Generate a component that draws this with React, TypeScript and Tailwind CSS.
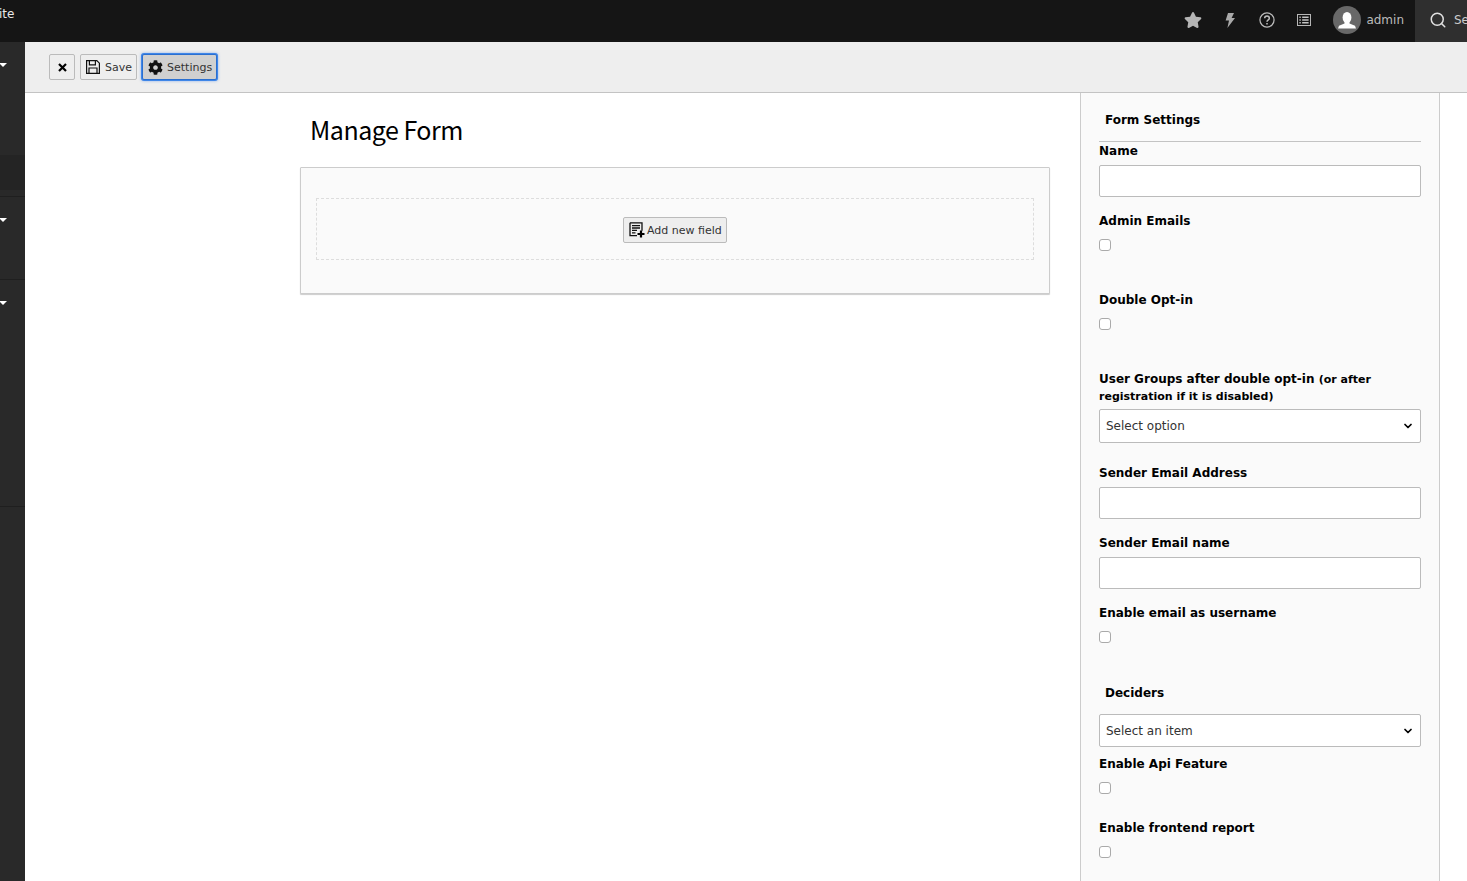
import React from "react";
import { ChevronDown, Search } from "lucide-react";
import { FaCog, FaStar } from "react-icons/fa";

const font = "font-['DejaVu_Sans','Liberation_Sans',sans-serif]";

const SideGroup = ({ h, border = true }: { h: string; border?: boolean }) => (
  <div className={`${h} pt-[21px] ${border ? "border-b border-[#1f1f1f]" : ""}`}>
    <div className="-ml-[1px] h-0 w-0 border-x-[4px] border-t-[4px] border-x-transparent border-t-white" />
  </div>
);

const Label = ({ children, className = "" }: { children: React.ReactNode; className?: string }) => (
  <label className={`block text-[12px] leading-[16px] font-bold text-black ${className}`}>{children}</label>
);

const TextInput = ({ className = "" }: { className?: string }) => (
  <input type="text" className={`block h-[32px] w-[322px] rounded-[2px] border border-[#bbbbbb] bg-white ${className}`} />
);

const Check = ({ className = "" }: { className?: string }) => (
  <input type="checkbox" className={`block h-[12px] w-[12px] appearance-none rounded-[3px] border border-[#aaaaaa] bg-white ${className}`} />
);

const Select = ({ text, className = "" }: { text: string; className?: string }) => (
  <div className={`relative w-[322px] ${className}`}>
    <select className="block h-full w-full appearance-none rounded-[2px] border border-[#bbbbbb] bg-white pl-[6px] text-[12px] text-[#333333] outline-none">
      <option>{text}</option>
    </select>
    <ChevronDown size={12} strokeWidth={3.5} className="absolute right-[7px] top-[11px] text-black" />
  </div>
);

const SaveIcon = () => (
  <svg width="16" height="16" viewBox="0 0 16 16" fill="none" stroke="#111" strokeWidth="1.2">
    <path d="M1.6 1.6h10.2l2.6 2.6v10.2H1.6z" />
    <path d="M4.4 1.6v4.2h6V1.6M4 14.4V9h8v5.4" />
  </svg>
);

const AddFieldIcon = () => (
  <svg width="16" height="16" viewBox="0 0 16 16" fill="none">
    <path d="M1 .8h12v8M8 13.6H1V.8" stroke="#111" strokeWidth="1.3" />
    <path d="M3 3.6h8M3 6h8M3 8.4h5M3 10.8h3.5" stroke="#111" strokeWidth="1.3" />
    <path d="M12 8.5v7M8.5 12h7" stroke="#000" strokeWidth="2.2" />
  </svg>
);

const TopIcons = () => (
  <div className="flex items-center">
    <FaStar size={18} className="text-[#b4b4b4]" />
    <svg width="10" height="15" viewBox="0 0 10 15" className="ml-[23px]" fill="#a9a9a9">
      <path d="M3 0h6L6.6 5H10L2.4 15l1.6-7.4H.6z" />
    </svg>
    <svg width="16" height="16" viewBox="0 0 17 17" className="ml-[24px]" fill="none" stroke="#bdbdbd" strokeWidth="1.3">
      <circle cx="8.5" cy="8.5" r="7.5" />
      <path d="M6 6.6c0-3.2 5-3.2 5 0 0 1.8-2.5 1.8-2.5 3.8" strokeWidth="1.6" />
      <path d="M8.5 11.6v1.8" strokeWidth="1.6" />
    </svg>
    <svg width="14" height="12" viewBox="0 0 15 13" className="ml-[22px]" fill="none" stroke="#c4c4c4">
      <rect x="0.5" y="0.5" width="14" height="12" />
      <path d="M2.5 3.5h1.5M5.5 3.5h7M2.5 6.5h1.5M5.5 6.5h7M2.5 9.5h1.5M5.5 9.5h7" strokeWidth="1.5" />
    </svg>
  </div>
);

const Avatar = () => (
  <svg width="28" height="28" viewBox="0 0 28 28" className="ml-[22px]">
    <circle cx="14" cy="14" r="14" fill="#686868" />
    <ellipse cx="14" cy="11.5" rx="4.4" ry="5.5" fill="#fff" />
    <path d="M11.5 15.5h5v2l5.5 2.2 1 2.8H5l1-2.8 5.5-2.2z" fill="#fff" />
  </svg>
);

export default function App() {
  return (
    <div className={`flex h-[881px] w-[1467px] flex-col overflow-hidden bg-white ${font}`}>
      {/* top bar */}
      <header className="flex h-[42px] shrink-0 items-stretch bg-[#151515]">
        <div className="-ml-[1px] pt-[5px] text-[12px] leading-[18px] text-[#e8e8e8]">ite</div>
        <div className="ml-auto flex items-center pb-[2px]">
          <TopIcons />
          <Avatar />
          <span className="ml-[5px] text-[12px] leading-[16px] text-[#bbbbbb]">admin</span>
        </div>
        <div className="ml-[11px] flex w-[52px] items-center overflow-hidden whitespace-nowrap bg-[#2f2f2f] pb-[3px] pl-[14px]">
          <Search size={18} strokeWidth={2} className="shrink-0 text-[#e0e0e0]" />
          <span className="ml-[7px] text-[12px] text-[#cccccc]">Search</span>
        </div>
      </header>

      <div className="flex min-h-0 flex-1">
        {/* module menu */}
        <aside className="w-[25px] shrink-0 bg-[#292929]">
          <SideGroup h="h-[113px]" border={false} />
          <div className="h-[35px] bg-[#242424]" />
          <div className="h-[7px] border-b border-[#1f1f1f]" />
          <SideGroup h="h-[83px]" />
          <SideGroup h="h-[227px]" />
        </aside>

        <div className="flex min-w-0 flex-1 flex-col">
          {/* doc header */}
          <div className="flex h-[51px] shrink-0 items-start gap-[5px] border-b border-[#c3c3c3] bg-[#eeeeee] pl-[24px] pt-[12px] text-[11px] text-[#333333]">
            <button className="flex h-[26px] w-[26px] items-center justify-center rounded-[2px] border border-[#bbbbbb] bg-[#eeeeee]">
              <svg width="9" height="9" viewBox="0 0 9 9" stroke="#000" strokeWidth="2.2">
                <path d="M1 1l7 7M8 1l-7 7" />
              </svg>
            </button>
            <button className="flex h-[26px] w-[57px] items-center gap-[4px] rounded-[2px] border border-[#bbbbbb] bg-[#eeeeee] pl-[4px]">
              <SaveIcon />
              <span className="pt-[2px]">Save</span>
            </button>
            <button className="flex h-[26px] w-[75px] items-center gap-[4px] rounded-[2px] border border-[#2a6fd0] bg-[#d0d0d0] pl-[5px] shadow-[0_0_0_1px_#3f86e8,0_0_3px_1px_rgba(80,140,230,0.6)]">
              <FaCog size={15} className="text-[#111111]" />
              <span className="pt-[2px]">Settings</span>
            </button>
          </div>

          <div className="flex min-h-0 flex-1">
            {/* form area */}
            <main className="w-[1055px] shrink-0 pl-[275px]">
              <h1 className="mt-[18px] pl-[10px] font-['Noto_Sans_CJK_SC','Noto_Sans',sans-serif] text-[25px] leading-[36px] tracking-[-0.5px] text-black">Manage Form</h1>
              <section className="mt-[20px] h-[127px] w-[750px] rounded-[1px] border border-[#cccccc] bg-[#fafafa] px-[15px] pt-[30px] shadow-[0_1px_1px_rgba(0,0,0,0.2)]">
                <div className="flex h-[62px] items-center justify-center border border-dashed border-[#dddddd] pt-[1px]">
                  <button className="flex h-[26px] w-[104px] items-center gap-[2px] rounded-[2px] border border-[#bbbbbb] bg-[#eeeeee] pl-[5px] text-[11px] text-[#333333]">
                    <AddFieldIcon />
                    <span className="pt-[3px]">Add new field</span>
                  </button>
                </div>
              </section>
            </main>

            {/* settings panel */}
            <aside className="h-[900px] w-[360px] shrink-0 border-x border-[#cccccc] bg-[#fafafa] pl-[18px]">
              <div className="mt-[18px] pl-[6px] text-[12px] leading-[18px] font-bold text-black">Form Settings</div>
              <div className="mt-[12px] w-[322px] border-t border-[#c3c3c3]" />
              <Label className="mt-[1px]">Name</Label>
              <TextInput className="mt-[6px]" />
              <Label className="mt-[16px]">Admin Emails</Label>
              <Check className="mt-[10px]" />
              <Label className="mt-[41px]">Double Opt-in</Label>
              <Check className="mt-[10px]" />
              <Label className="mt-[41px] leading-[17px]">
                User Groups after double opt-in <span className="text-[11px]">(or after registration if it is disabled)</span>
              </Label>
              <Select text="Select option" className="mt-[4px] h-[34px]" />
              <Label className="mt-[22px]">Sender Email Address</Label>
              <TextInput className="mt-[6px]" />
              <Label className="mt-[16px]">Sender Email name</Label>
              <TextInput className="mt-[6px]" />
              <Label className="mt-[16px]">Enable email as username</Label>
              <Check className="mt-[10px]" />
              <div className="mt-[42px] pl-[6px] text-[12px] leading-[16px] font-bold text-black">Deciders</div>
              <Select text="Select an item" className="mt-[13px] h-[33px]" />
              <Label className="mt-[9px]">Enable Api Feature</Label>
              <Check className="mt-[10px]" />
              <Label className="mt-[26px]">Enable frontend report</Label>
              <Check className="mt-[10px]" />
            </aside>
          </div>
        </div>
      </div>
    </div>
  );
}
